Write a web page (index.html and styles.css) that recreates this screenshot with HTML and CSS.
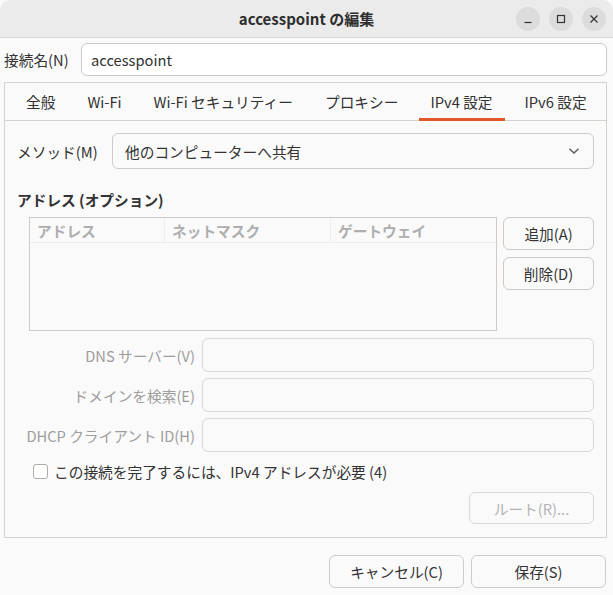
FILE: index.html
```html
<!DOCTYPE html>
<html lang="ja">
<head>
<meta charset="utf-8">
<link rel="stylesheet" href="styles.css">
</head>
<body>
<div class="window">
  <header class="titlebar">
    <div class="tb-spacer"></div>
    <div class="title">accesspoint の編集</div>
    <div class="controls">
      <span class="wbtn"><svg width="10" height="10" viewBox="0 0 10 10"><path d="M1.5 8.5h7" stroke="#333" stroke-width="1.2" fill="none"/></svg></span>
      <span class="wbtn"><svg width="10" height="10" viewBox="0 0 10 10"><rect x="1.5" y="1.5" width="7" height="7" stroke="#333" stroke-width="1.2" fill="none"/></svg></span>
      <span class="wbtn"><svg width="10" height="10" viewBox="0 0 10 10"><path d="M1.5 1.5l7 7M8.5 1.5l-7 7" stroke="#333" stroke-width="1.2" fill="none"/></svg></span>
    </div>
  </header>

  <div class="name-row">
    <label class="name-label">接続名(N)</label>
    <div class="entry name-entry">accesspoint</div>
  </div>

  <div class="notebook">
    <div class="tabs">
      <div class="tab">全般</div>
      <div class="tab">Wi-Fi</div>
      <div class="tab">Wi-Fi セキュリティー</div>
      <div class="tab">プロキシー</div>
      <div class="tab active">IPv4 設定</div>
      <div class="tab">IPv6 設定</div>
    </div>
    <div class="page">
      <div class="method-row">
        <span class="method-label">メソッド(M)</span>
        <div class="combo">
          <span>他のコンピューターへ共有</span>
          <svg class="chev" width="12" height="8" viewBox="0 0 12 8"><path d="M1.5 1.8l4.5 4.2 4.5-4.2" stroke="#555" stroke-width="1.3" fill="none"/></svg>
        </div>
      </div>

      <div class="section-title">アドレス (オプション)</div>

      <div class="addr-area">
        <div class="table">
          <div class="thead">
            <div class="th c1">アドレス</div>
            <div class="th c2">ネットマスク</div>
            <div class="th c3">ゲートウェイ</div>
          </div>
        </div>
        <div class="side-btns">
          <div class="btn">追加(A)</div>
          <div class="btn">削除(D)</div>
        </div>
      </div>

      <div class="form">
        <div class="frow">
          <span class="flabel">DNS サーバー(V)</span>
          <div class="field"></div>
        </div>
        <div class="frow">
          <span class="flabel">ドメインを検索(E)</span>
          <div class="field"></div>
        </div>
        <div class="frow">
          <span class="flabel">DHCP クライアント ID(H)</span>
          <div class="field"></div>
        </div>
      </div>

      <div class="check-row">
        <span class="checkbox"></span>
        <span>この接続を完了するには、IPv4 アドレスが必要 (4)</span>
      </div>

      <div class="route-row">
        <div class="btn route disabled-btn">ルート(R)...</div>
      </div>
    </div>
  </div>

  <div class="actions">
    <div class="btn action">キャンセル(C)</div>
    <div class="btn action">保存(S)</div>
  </div>
</div>
</body>
</html>
```

FILE: styles.css
```css
* { box-sizing: border-box; }
html, body {
  margin: 0;
  padding: 0;
  background: #fafafa;
}
body {
  width: 613px;
  height: 595px;
  overflow: hidden;
  font-family: "Noto Sans CJK JP", "Noto Sans", sans-serif;
  font-size: 14.7px;
  color: #333333;
}
.window {
  width: 613px;
  height: 595px;
  background: #fafafa;
}
.titlebar {
  height: 38px;
  background: #ebebeb;
  border-bottom: 1px solid #d9d9d9;
  border-radius: 10px 10px 0 0;
  display: grid;
  grid-template-columns: 1fr auto 1fr;
  align-items: center;
}
.title {
  font-weight: bold;
  font-size: 15px;
  color: #2e2e2e;
}
.controls {
  display: flex;
  justify-content: flex-end;
  gap: 9px;
  padding-right: 7px;
}
.wbtn {
  width: 24px;
  height: 24px;
  border-radius: 50%;
  background: #dcdcdc;
  display: flex;
  align-items: center;
  justify-content: center;
}
.name-row {
  display: flex;
  align-items: center;
  gap: 12px;
  margin: 5px 6px 0 4px;
}
.name-label { width: 65px; white-space: nowrap; }
.entry {
  height: 33px;
  background: #ffffff;
  border: 1px solid #cfcac5;
  border-radius: 6px;
  display: flex;
  align-items: center;
  padding: 0 9px;
}
.name-entry { flex: 1; }
.notebook {
  margin: 6px 6px 0 4px;
  width: 603px;
  height: 456px;
  border: 1px solid #d6d2ce;
  background: #fafafa;
}
.tabs {
  height: 38px;
  display: flex;
  padding-left: 5px;
  border-bottom: 1px solid #d6d2ce;
}
.tab {
  padding: 0 16px;
  display: flex;
  align-items: center;
  white-space: nowrap;
  position: relative;
}
.tab.active::after {
  content: "";
  position: absolute;
  left: 5px;
  right: 4px;
  bottom: -1px;
  height: 3px;
  background: #e2582b;
}
.page {
  width: 601px;
  padding: 12px 12px 0 12px;
}
.method-row {
  display: flex;
  align-items: center;
  gap: 11px;
}
.method-label { width: 84px; white-space: nowrap; }
.combo {
  flex: 1;
  height: 36px;
  border: 1px solid #cfcac5;
  border-radius: 6px;
  background: #fafafa;
  display: flex;
  align-items: center;
  justify-content: space-between;
  padding: 0 13px 0 12px;
}
.section-title {
  margin-top: 21px;
  line-height: 20px;
  font-weight: bold;
}
.addr-area {
  margin-top: 7px;
  margin-left: 12px;
  display: flex;
  gap: 6px;
}
.table {
  width: 468px;
  height: 114px;
  border: 1px solid #cfcac5;
  background: #fafafa;
}
.thead {
  display: flex;
  height: 25px;
  border-bottom: 1px solid #f0eeec;
}
.th {
  color: #aeaeae;
  font-weight: bold;
  display: flex;
  align-items: center;
  padding-left: 7px;
  border-right: 1px solid #f0eeec;
}
.c1 { width: 135px; }
.c2 { width: 166px; }
.c3 { flex: 1; border-right: none; }
.side-btns {
  flex: 1;
  display: flex;
  flex-direction: column;
  gap: 7px;
}
.btn {
  height: 33px;
  border: 1px solid #cfcac5;
  border-radius: 6px;
  background: #fafafa;
  display: flex;
  align-items: center;
  justify-content: center;
  white-space: nowrap;
}
.form {
  margin-top: 7px;
  width: 577px;
  display: grid;
  row-gap: 6px;
}
.frow {
  display: grid;
  grid-template-columns: 178px 392px;
  column-gap: 7px;
  align-items: center;
}
.flabel {
  text-align: right;
  color: #9d9d9d;
  white-space: nowrap;
}
.field {
  height: 34px;
  background: #fafafa;
  border: 1px solid #dcd8d4;
  border-radius: 6px;
}
.check-row {
  margin-top: 9px;
  margin-left: 16px;
  height: 20px;
  display: flex;
  align-items: center;
  gap: 6px;
}
.checkbox {
  width: 15px;
  height: 15px;
  border: 1px solid #b0aca8;
  border-radius: 3px;
  background: #ffffff;
}
.route-row {
  margin-top: 11px;
  display: flex;
  justify-content: flex-end;
}
.route {
  width: 125px;
  height: 32px;
}
.disabled-btn {
  color: #b3b3b3;
  border-color: #dcd8d4;
}
.actions {
  margin-top: 17px;
  padding-right: 7px;
  display: flex;
  justify-content: flex-end;
  gap: 7px;
}
.action {
  width: 135px;
  height: 33px;
}
```
